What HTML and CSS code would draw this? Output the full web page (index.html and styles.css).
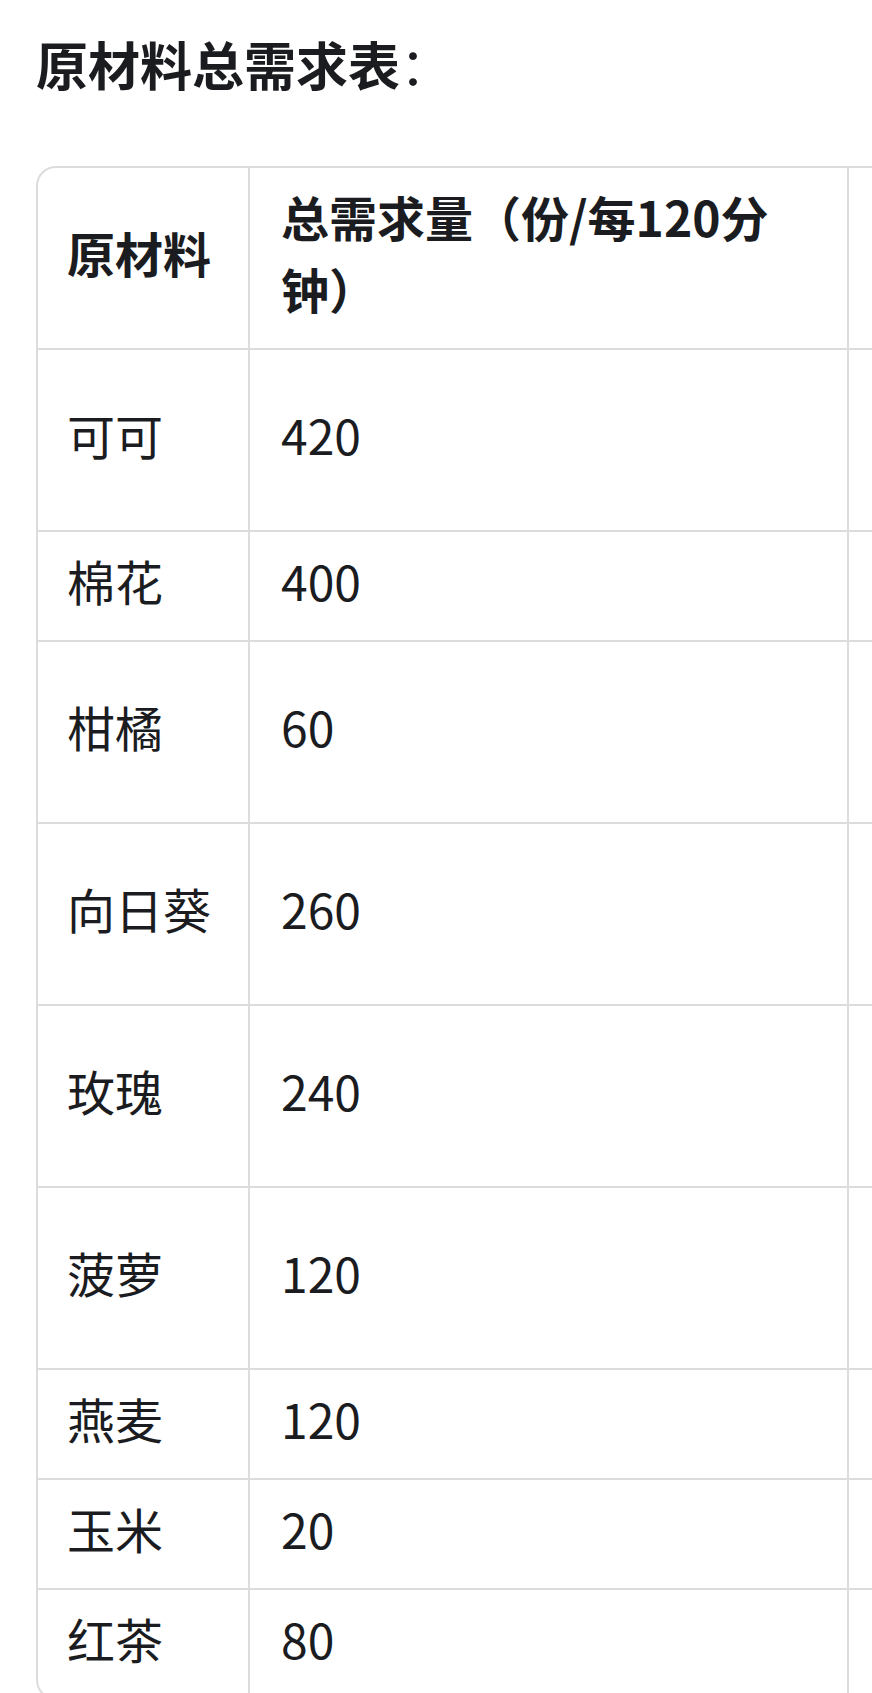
FILE: index.html
```html
<!DOCTYPE html>
<html lang="zh-CN">
<head>
<meta charset="utf-8">
<title>原材料总需求表</title>
<link rel="stylesheet" href="styles.css">
</head>
<body>
<main class="page">
  <p class="title"><strong>原材料总需求表</strong>：</p>
  <div class="table-wrap">
    <table class="demand">
      <thead>
        <tr><th class="c-name">原材料</th><th class="c-qty">总需求量（份/每120分钟）</th><th class="c-more"></th></tr>
      </thead>
      <tbody>
        <tr class="tall"><td>可可</td><td>420</td><td></td></tr>
        <tr><td>棉花</td><td>400</td><td></td></tr>
        <tr class="tall"><td>柑橘</td><td>60</td><td></td></tr>
        <tr class="tall"><td>向日葵</td><td>260</td><td></td></tr>
        <tr class="tall"><td>玫瑰</td><td>240</td><td></td></tr>
        <tr class="tall"><td>菠萝</td><td>120</td><td></td></tr>
        <tr><td>燕麦</td><td>120</td><td></td></tr>
        <tr><td>玉米</td><td>20</td><td></td></tr>
        <tr><td>红茶</td><td>80</td><td></td></tr>
      </tbody>
    </table>
  </div>
</main>
</body>
</html>
```
FILE: styles.css
```css
html, body {
  margin: 0;
  padding: 0;
  background: #ffffff;
  overflow: hidden;
}
body {
  font-family: "Noto Sans CJK SC", "Noto Sans", sans-serif;
  color: #1b1c1f;
}
.page {
  padding: 25px 0 0 36px;
}
.title {
  margin: 0;
  font-size: 52px;
  line-height: 78px;
  font-weight: 400;
}
.title strong {
  font-weight: 700;
}
.table-wrap {
  margin-top: 63px;
  width: 1300px;
  border: 2px solid #dcdcdc;
  border-radius: 20px;
  overflow: hidden;
}
.demand {
  border-collapse: collapse;
  font-size: 48px;
  line-height: 72px;
  width: 100%;
}
.demand th,
.demand td {
  border: 2px solid #dcdcdc;
  padding: 12px 32px 24px 31px;
  text-align: left;
  vertical-align: middle;
}
.demand th:first-child,
.demand td:first-child {
  padding-left: 29px;
  padding-right: 34px;
}
.demand th {
  font-weight: 700;
}
.demand tr:first-child th { border-top: none; }
.demand tr > :first-child { border-left: none; }
.demand tbody tr:last-child td { border-bottom: none; }
.c-name { width: 147px; }
.c-qty { width: 534px; }
.demand tr.tall { height: 182px; }
```
